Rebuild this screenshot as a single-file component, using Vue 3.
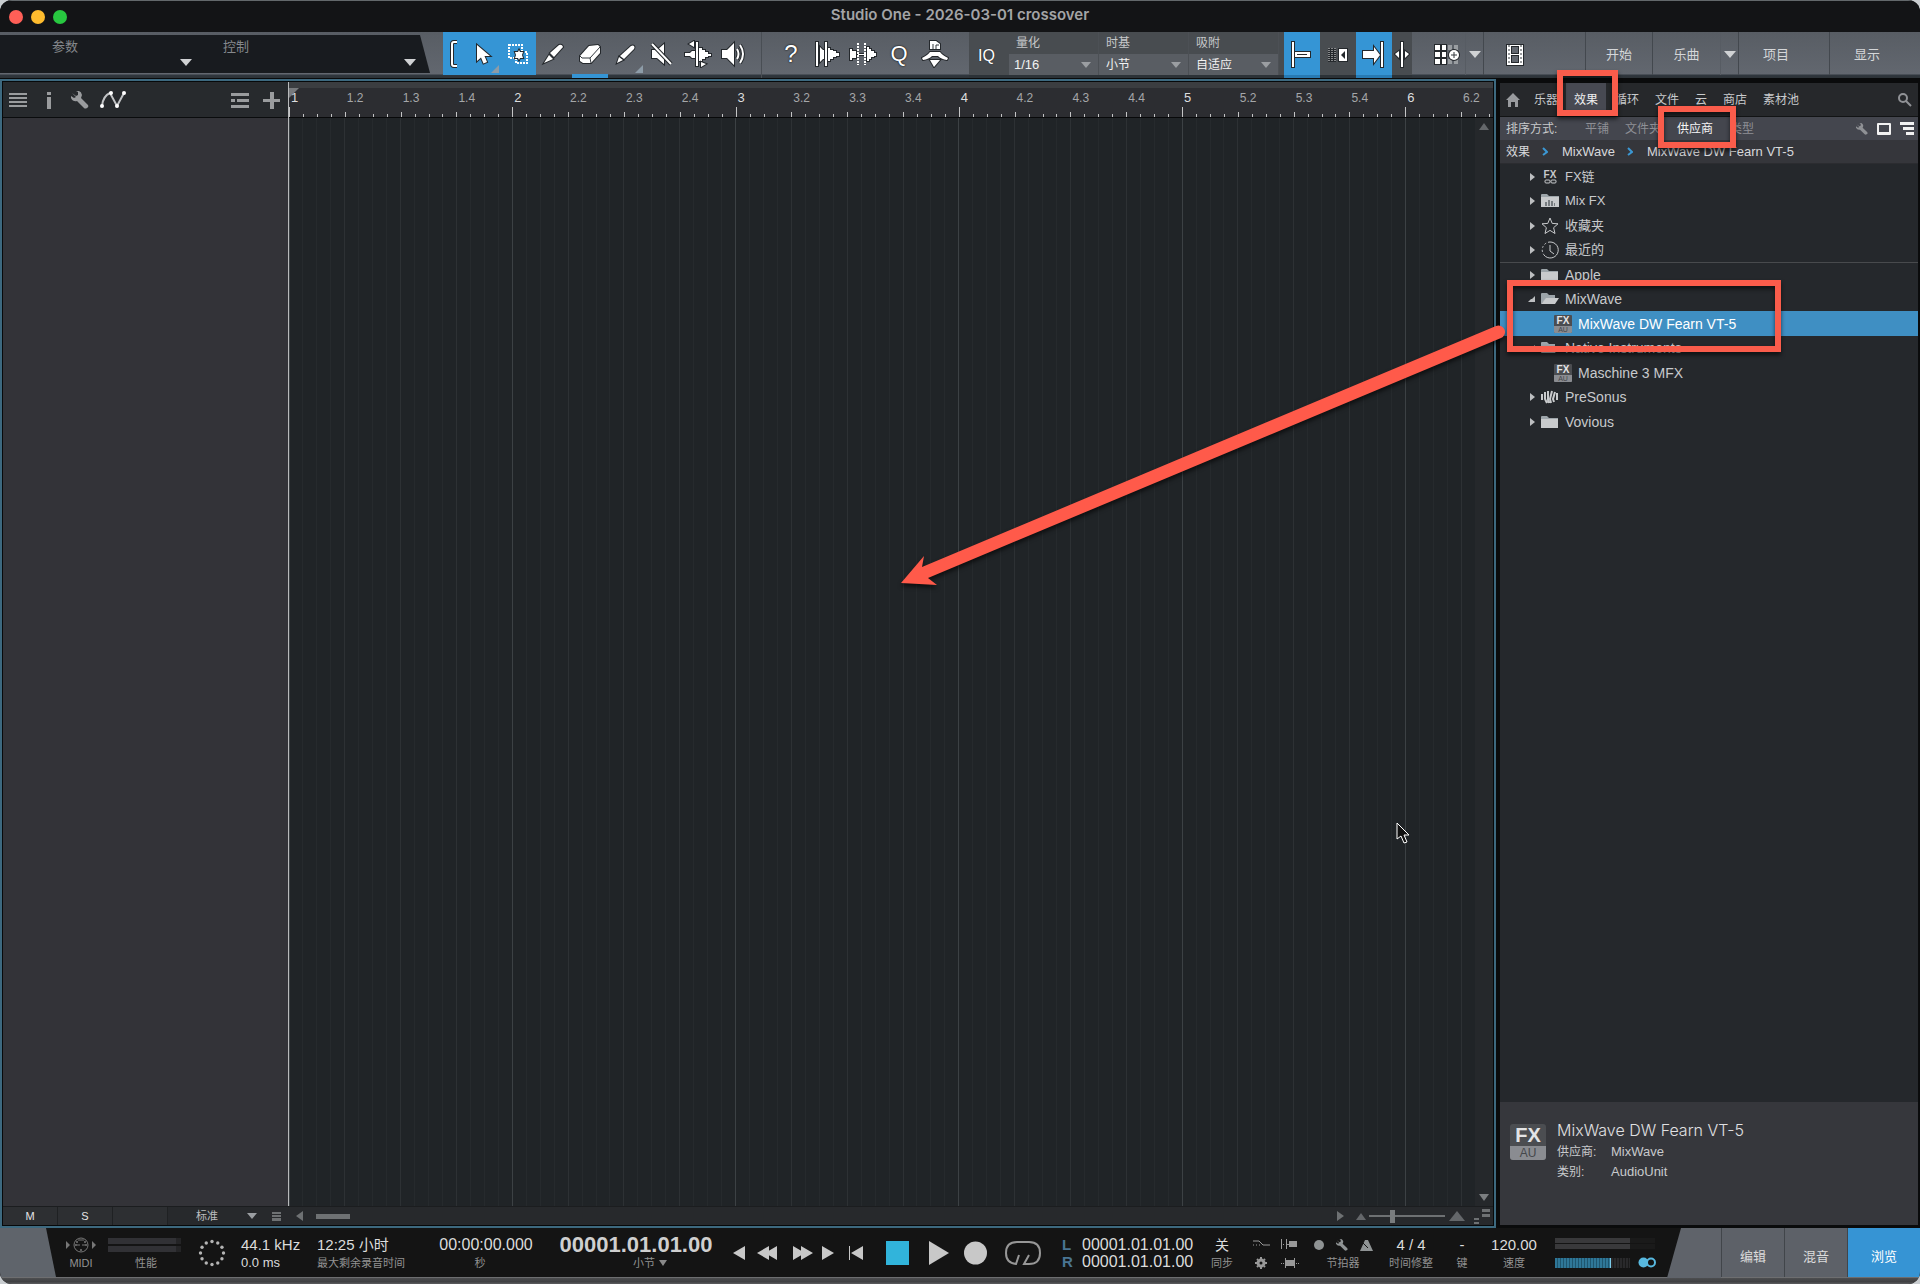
<template>
  <div class="window">
    <header class="titlebar">
      <div class="lights">
        <button class="light red" aria-label="关闭"></button>
        <button class="light yellow" aria-label="最小化"></button>
        <button class="light green" aria-label="缩放"></button>
      </div>
      <h1>Studio One - 2026-03-01 crossover</h1>
    </header>

    <div class="toolbar">
      <div class="params">
        <button class="param">参数<i class="caret"></i></button>
        <button class="param wide">控制<i class="caret"></i></button>
      </div>

      <div class="tools">
        <div class="tool-active">
          <button class="tool slim" aria-label="括号">
            <svg width="10" height="28" viewBox="0 0 10 28"><path class="dark" d="M8 2H5Q3 2 3 4v20q0 2 2 2h3" /><path class="line" d="M8 2H5Q3 2 3 4v20q0 2 2 2h3" /></svg>
          </button>
          <button class="tool" aria-label="箭头工具">
            <svg width="28" height="28" viewBox="0 0 28 28"><path d="M9 5v16l4-3.500 2.500 6 3.500-1.500-2.500-6h5.500z" /></svg>
            <i class="corner"></i>
          </button>
          <button class="tool" aria-label="范围工具">
            <svg width="28" height="28" viewBox="0 0 28 28">
              <path class="line dash" d="M5 5h13v13H5zM12 12h11v11H12z" />
              <path d="M11 12l3 0 1-2 1 2h3l-1 3 1 3h-3l-1 2-1-2h-3l1-3z" />
            </svg>
          </button>
        </div>
        <button class="tool" aria-label="分割工具">
          <svg width="28" height="28" viewBox="0 0 28 28"><path d="M4 23l5-8 4 4z" /><path d="M10 13L19 5q3-1 4 2l-9 10z" /></svg>
        </button>
        <button class="tool marked" aria-label="橡皮擦工具">
          <svg width="28" height="28" viewBox="0 0 28 28"><path d="M4 16L13 6l9-1 2 2v6l-9 10H7l-3-2z" /><path class="thin" d="M4 16l2 2h8l10-11M14 18l1 5" /></svg>
        </button>
        <button class="tool" aria-label="铅笔工具">
          <svg width="28" height="28" viewBox="0 0 28 28"><path d="M5 23l2-6 4 3z" /><path d="M8 16L19 6q2-1 3 0t0 3L12 19z" /></svg>
          <i class="corner"></i>
        </button>
        <button class="tool" aria-label="静音工具">
          <svg width="28" height="28" viewBox="0 0 28 28"><path d="M4 10h5l7-6v20l-7-6H4z" /><path class="dark" d="M4 4l19 20" /><path class="line" d="M4 4l19 20" /></svg>
        </button>
        <button class="tool" aria-label="弯曲工具">
          <svg width="28" height="28" viewBox="0 0 28 28"><path d="M1 13h5l2-2h3v7H8l-2-2H1z" /><path d="M15 8h3v2h3v2h3v2h3v2h-3v1h-3v2h-3v2h-3z" /><path d="M12 2h2v24h-2z" /><path d="M10 1v6L5 4zM17 27v-5l5 2z" /></svg>
        </button>
        <button class="tool" aria-label="试听工具">
          <svg width="28" height="28" viewBox="0 0 28 28"><path d="M2 10h5l7-7v22l-7-7H2z" /><path class="dark" d="M17 9q3 5 0 10M20 5q6 9 0 18" /><path class="line" d="M17 9q3 5 0 10M20 5q6 9 0 18" /></svg>
        </button>
      </div>

      <div class="tools actions">
        <button class="tool question" aria-label="信息">?</button>
        <button class="tool" aria-label="音频弯曲">
          <svg width="28" height="28" viewBox="0 0 28 28"><path d="M7 7l3 3h5V8h2v2h3v1h3v2h3v3h-3v1h-3v2h-3v2h-2v-2h-5l-3 3z" /><path d="M3 2h2v24H3z" /><path d="M12 2h2v24h-2z" /></svg>
        </button>
        <button class="tool" aria-label="剥离静音">
          <svg width="28" height="28" viewBox="0 0 28 28"><path d="M1 9h2v2h4v7H3v2H1z" /><path d="M18 7h2v2h2v2h3v2h2v3h-2v1h-3v2h-2v2h-2z" /><path d="M9 14h8v1H9z" /><path class="line dash" d="M9 3v22M16 3v22" /></svg>
        </button>
        <button class="tool round" aria-label="量化">Q</button>
        <button class="tool" aria-label="宏">
          <svg width="28" height="28" viewBox="0 0 28 28"><path d="M9 1h6l4 3v5H9z" /><path class="thin" d="M12 9V4M15 9V5h3" /><path d="M1 18q6-3 8-6h10q2 3 8 6l-1 2q-6-1-9-4h-6q-3 3-9 4z" /><path d="M9 20h10l-6 7z" /></svg>
        </button>
      </div>

      <div class="quantize">
        <button class="iq">IQ</button>
        <div v-for="f in fields" :key="f.id" class="field">
          <label :for="f.id">{{ f.label }}</label>
          <div class="select-box">
            <select :id="f.id" v-model="f.value"><option>{{ f.value }}</option></select>
            <i class="caret small"></i>
          </div>
        </div>
        <div class="snaps">
          <button class="snap on" aria-label="吸附到网格">
            <svg width="28" height="28" viewBox="0 0 28 28"><path d="M6 12h16v5H6z" /><path d="M4 2h2v25H4z" /><path class="fill-dark" d="M9 14h10v1H9z" /></svg>
          </button>
          <button class="snap" aria-label="波纹编辑">
            <svg width="28" height="28" viewBox="0 0 28 28"><path class="fill-dark" d="M4 8h8v14H4z" /><path class="ripple" d="M5 8v14M8 8v14M11 8v14" /><path d="M15 9h8v12h-8z" /><path class="fill-dark" d="M21 11v8l-4-4z" /></svg>
          </button>
          <button class="snap on" aria-label="自动滚动">
            <svg width="28" height="28" viewBox="0 0 28 28"><path d="M3 11h11V7l6 8-6 8v-5H3z" /><path d="M21 2h2v25h-2z" /></svg>
          </button>
          <button class="snap narrow" aria-label="光标跟随">
            <svg width="16" height="28" viewBox="0 0 16 28"><path d="M7 2h2v25H7zM5 11v7l-4-4zM11 11v7l4-4z" /></svg>
          </button>
        </div>
      </div>

      <nav class="pages">
        <button class="page grid-btn" aria-label="轨道">
          <svg width="28" height="24" viewBox="0 0 28 24">
            <path class="faint" d="M14 2h4v5h-4zM20 2h4v5h-4zM20 16h4v5h-4zM14 16h4v5h-4z" />
            <path d="M1 2h5v5H1zM8 2h4v5H8zM1 9h5v5H1zM8 9h4v5H8zM1 16h5v5H1zM8 16h4v5H8z" />
            <circle cx="20" cy="12" r="5" /><path class="thin" d="M17 12h6M20 9v6" />
          </svg>
        </button>
        <button class="page drop" aria-label="轨道选项"><i class="caret"></i></button>
        <button class="page film" aria-label="视频">
          <svg width="20" height="24" viewBox="0 0 20 24"><path d="M2 2h16v20H2z" /><path class="fill-gray" d="M7 4h6v6H7zM7 13h6v6H7z" /><path class="thin" stroke-dasharray="2 2" d="M4 2v20M16 2v20" /></svg>
        </button>
        <button class="page start">开始</button>
        <button class="page song">乐曲</button>
        <button class="page drop" aria-label="乐曲列表"><i class="caret"></i></button>
        <button class="page project">项目</button>
        <button class="page show">显示</button>
      </nav>
    </div>

    <main class="main">
      <section class="arrange">
        <div class="track-side">
          <div class="track-head">
            <button class="ico" aria-label="菜单"><svg width="18" height="14" viewBox="0 0 18 14"><path d="M0 0h18v2H0zM0 4h18v2H0zM0 8h18v2H0zM0 12h18v2H0z" /></svg></button>
            <button class="ico" aria-label="检查器"><svg width="4" height="17" viewBox="0 0 4 17"><path d="M0 0h4v3H0zM0 5h4v12H0z" /></svg></button>
            <button class="ico wrench" aria-label="设置"><svg width="18" height="18" viewBox="0 0 18 18"><path :d="wrench" /></svg></button>
            <button class="ico curve" aria-label="自动化">
              <svg width="28" height="18" viewBox="0 0 28 18"><path class="wave" d="M3 15Q4 5 11 2l7 13 7-13" /><circle cx="3" cy="15" r="2" /><circle cx="12" cy="2" r="2" /><circle cx="18" cy="15" r="2" /><circle cx="25" cy="2" r="2" /></svg>
            </button>
            <button class="ico tracks" aria-label="轨道列表"><svg width="18" height="15" viewBox="0 0 18 15"><path d="M0 0h18v3H0zM0 6h4v3H0zM6 6h12v3H6zM0 12h18v3H0z" /></svg></button>
            <button class="ico" aria-label="添加轨道"><svg width="17" height="17" viewBox="0 0 17 17"><path d="M7 0h4v7h6v3h-6v7H7v-7H0V7h7z" /></svg></button>
          </div>
          <div class="track-list"></div>
        </div>

        <div class="timeline">
          <div class="ruler">
            <i class="loop-start"></i>
            <span v-for="b in beats" :key="b.label" class="beat" :class="{ bar: b.bar }" :style="{ width: beatWidth + '%' }">
              <b>{{ b.label }}</b>
            </span>
          </div>
          <div class="lanes">
            <svg class="grid" width="100%" height="100%">
              <line v-for="l in lines" :key="l.n" :x1="l.x + '%'" :x2="l.x + '%'" y1="0" y2="100%" :class="l.kind" />
            </svg>
            <div class="vscroll">
              <i class="up"></i>
              <i class="down"></i>
            </div>
          </div>
        </div>

        <div class="arrange-foot">
          <button class="cell">M</button>
          <button class="cell">S</button>
          <span class="cell"></span>
          <div class="select-box height-box">
            <select v-model="trackHeight" aria-label="轨道高度"><option>标准</option></select>
            <i class="caret small"></i>
          </div>
          <svg class="mini" width="9" height="9" viewBox="0 0 9 9"><path d="M0 0h9v2H0zM0 3h9v2H0zM0 6h9v3H0z" /></svg>
          <i class="left"></i>
          <i class="hthumb"></i>
          <i class="right"></i>
          <i class="hill"></i>
          <input v-model="zoom" class="zoom" type="range" min="0" max="100" aria-label="缩放" />
          <i class="hill big"></i>
          <svg class="mini levels" width="16" height="15" viewBox="0 0 16 15"><path d="M8 0h8v3H8zM8 5h8v3H8zM0 9h5v2H0zM0 13h5v2H0z" /></svg>
        </div>
      </section>

      <aside class="browser">
        <div class="tabs">
          <button class="home" aria-label="主页"><svg width="14" height="14" viewBox="0 0 14 14"><path d="M7 0l7 7h-2v7H9V9H5v5H2V7H0z" /></svg></button>
          <button v-for="t in tabs" :key="t" class="tab" :class="{ selected: t === tab }" @click="tab = t">{{ t }}</button>
          <button class="search" aria-label="搜索"><svg width="15" height="15" viewBox="0 0 15 15"><circle cx="6" cy="6" r="4" /><path d="M9 9l5 5" /></svg></button>
        </div>
        <div class="sort">
          <span class="sort-label">排序方式:</span>
          <button v-for="s in sorts" :key="s" class="sort-by" :class="{ selected: s === sort }" @click="sort = s">{{ s }}</button>
          <div class="sort-icons">
            <svg class="dim" width="12" height="12" viewBox="0 0 18 18"><path :d="wrench" /></svg>
            <svg width="14" height="12" viewBox="0 0 14 12"><path fill-rule="evenodd" d="M1 0h12q1 0 1 1v10q0 1-1 1H1q-1 0-1-1V1q0-1 1-1zM2 2v7h10V2z" /></svg>
            <svg width="14" height="13" viewBox="0 0 14 13"><path d="M0 0h14v3H0zM3 5h11v3H3zM6 10h8v3H6z" /></svg>
          </div>
        </div>
        <nav class="crumbs">
          <a href="#">效果</a>
          <svg width="6" height="9" viewBox="0 0 6 9"><path d="M1 1l4 4-4 3" /></svg>
          <a href="#" class="latin">MixWave</a>
          <svg width="6" height="9" viewBox="0 0 6 9"><path d="M1 1l4 4-4 3" /></svg>
          <a href="#" class="latin">MixWave DW Fearn VT-5</a>
        </nav>

        <ul class="tree">
          <li v-for="n in nodes" :key="n.name" class="node" :class="{ child: n.child, active: n.name === selected, divided: n.divided }">
            <button @click="selected = n.name">
              <i v-if="!n.child" class="twist" :class="{ open: n.open }"></i>
              <span v-if="n.icon === 'plugin'" class="plugin"><b>FX</b><small>AU</small></span>
              <span v-else-if="n.icon === 'chain'" class="chain">
                <b>FX</b>
                <svg width="13" height="5" viewBox="0 0 13 5"><rect x="1" y="1" width="5" height="3" rx="1" /><rect x="7" y="1" width="5" height="3" rx="1" /></svg>
              </span>
              <svg v-else class="kind" width="18" height="18" viewBox="0 0 18 18">
                <template v-if="n.icon === 'folder'">
                  <path class="back" d="M0 4q0-1 1-1h5l2 2h9v3H0z" /><path d="M0 6h17v9H0z" />
                </template>
                <template v-else-if="n.icon === 'open'">
                  <path class="back" d="M0 4q0-1 1-1h5l2 2h6v3H6l-6 6z" /><path d="M5 8h13l-4 6H0z" />
                </template>
                <template v-else-if="n.icon === 'mix'">
                  <path class="back" d="M0 3q0-1 1-1h5l2 2h10v3H0z" /><path d="M0 5h18v10H0z" /><path class="bars" d="M4 10h2v4H4zM7 8h2v6H7zM10 9h2v5h-2zM13 11h1v3h-1z" />
                </template>
                <path v-else-if="n.icon === 'star'" class="stroke" d="M9 1l2.200 5.400 5.800.400-4.400 3.900 1.400 5.800L9 13.400l-5 3.100 1.400-5.800L1 6.800l5.800-.4z" />
                <template v-else-if="n.icon === 'recent'">
                  <path class="stroke" d="M9 1a8 8 0 1 1-6 13M9 4v6l4 3" /><path class="stroke" stroke-dasharray="2 2" d="M9 1a8 8 0 0 0-6 13" />
                </template>
                <path v-else class="voices" d="M1 6v6M4 4v7l2 4M7 3v9l1 3M11 3L9 11l1 4M14 4l-2 7 1 3M16 5v7" />
              </svg>
              <span class="name">{{ n.name }}</span>
            </button>
          </li>
        </ul>

        <div class="details">
          <span class="plugin large"><b>FX</b><small>AU</small></span>
          <div>
            <h2>MixWave DW Fearn VT-5</h2>
            <dl>
              <dt>供应商:</dt><dd>MixWave</dd>
              <dt>类别:</dt><dd>AudioUnit</dd>
            </dl>
          </div>
        </div>
      </aside>
    </main>

    <footer class="transport">
      <i class="wedge"></i>
      <div class="stat midi">
        <span><svg width="32" height="18" viewBox="0 0 32 18"><path class="tri" d="M1 5v8l4-4zM27 5v8l4-4z" /><circle class="ring" cx="16" cy="9" r="7" /><circle cx="11" cy="9" r="1" /><circle cx="21" cy="9" r="1" /><circle cx="12" cy="6" r="1" /><circle cx="20" cy="6" r="1" /><circle cx="16" cy="14" r="1" /><path class="ring" d="M13 4h6M12 9h3M17 9h3" /></svg></span>
        <small>MIDI</small>
      </div>
      <div class="stat perf">
        <span class="meters"><i></i><i></i></span>
        <small>性能</small>
      </div>
      <div class="disk">
        <svg width="28" height="28" viewBox="0 0 28 28"><circle v-for="d in dots" :key="d.n" :cx="d.x" :cy="d.y" r="1.700" /></svg>
      </div>
      <div class="stat rate"><span>44.1 kHz</span><small>0.0 ms</small></div>
      <div class="stat remain"><span>12:25 小时</span><small>最大剩余录音时间</small></div>
      <div class="stat clock"><span>00:00:00.000</span><small>秒</small></div>
      <div class="stat position"><span>00001.01.01.00</span><small>小节<i class="caret tiny"></i></small></div>
      <div class="controls">
        <button aria-label="上一个"><svg width="12" height="24" viewBox="0 0 12 24"><path d="M12 5v14L0 12z" /></svg></button>
        <button aria-label="快退"><svg width="20" height="24" viewBox="0 0 20 24"><path d="M12 5v14L0 12zM20 5v14L8 12z" /></svg></button>
        <button aria-label="快进"><svg width="20" height="24" viewBox="0 0 20 24"><path d="M0 5v14l12-7zM8 5v14l12-7z" /></svg></button>
        <button aria-label="下一个"><svg width="12" height="24" viewBox="0 0 12 24"><path d="M0 5v14l12-7z" /></svg></button>
        <button aria-label="归零"><svg width="14" height="24" viewBox="0 0 14 24"><path d="M0 5h1v14H0zM14 5v14L2 12z" /></svg></button>
        <button aria-label="停止"><svg width="23" height="24" viewBox="0 0 23 24"><path class="stop" d="M0 0h23v24H0z" /></svg></button>
        <button aria-label="播放"><svg width="20" height="24" viewBox="0 0 20 24"><path d="M0 0v24l20-12z" /></svg></button>
        <button aria-label="录音"><svg width="23" height="24" viewBox="0 0 23 24"><circle cx="11.500" cy="12" r="11.500" /></svg></button>
        <button aria-label="循环"><svg width="36" height="24" viewBox="0 0 36 24"><path class="loop" d="M14 14l-3 9Q1 22 1 12 1 1 12 1h12q11 0 11 11t-11 11h-5l5-9" /></svg></button>
      </div>
      <div class="locators">
        <b>L</b><span>00001.01.01.00</span>
        <b>R</b><span>00001.01.01.00</span>
      </div>
      <div class="stat sync"><span>关</span><small>同步</small></div>
      <div class="options">
        <svg width="18" height="12" viewBox="0 0 18 12"><path class="stroke" d="M1 3h6l4 4h7" /><path class="stroke" stroke-dasharray="1 2" d="M1 7h7" /></svg>
        <svg width="16" height="12" viewBox="0 0 16 12"><path d="M0 1h1v10H0zM5 1h1v10H5zM8 3h8v6H8zM6 6h2v1H6zM2 6h1v1H2z" /></svg>
        <svg width="18" height="12" viewBox="0 0 18 12"><circle class="gear" cx="9" cy="6" r="3" /><path class="teeth" d="M9 0v2M9 10v2M3 6h2M13 6h2M5 2l1 1M12 9l1 1M5 10l1-1M12 3l1-1" /></svg>
        <svg width="18" height="12" viewBox="0 0 18 12"><path d="M4 1h1v2h8V1h1v10h-1V9H5v2H4zM0 6h1v1H0zM2 6h1v1H2zM15 6h1v1h-1zM17 6h1v1h-1z" /></svg>
      </div>
      <div class="stat metronome">
        <span>
          <svg width="10" height="12" viewBox="0 0 10 12"><circle cx="5" cy="6" r="5" /></svg>
          <svg width="12" height="12" viewBox="0 0 18 18"><path :d="wrench" /></svg>
          <svg width="13" height="12" viewBox="0 0 13 12"><path d="M5 1h3l5 11H0z" /><path class="cut" d="M1 2l7 7" /></svg>
        </span>
        <small>节拍器</small>
      </div>
      <div class="stat signature"><span>4 / 4</span><small>时间修整</small></div>
      <div class="stat key"><span>-</span><small>键</small></div>
      <div class="stat tempo"><span>120.00</span><small>速度</small></div>
      <div class="output">
        <span class="meters"><i></i><i></i></span>
        <div class="volume"><i class="level"></i><i class="rest"></i><svg width="19" height="11" viewBox="0 0 19 11"><circle cx="5.500" cy="5.500" r="5" /><circle class="ring" cx="13" cy="5.500" r="4" /></svg></div>
      </div>
      <div class="views">
        <i class="slope"></i>
        <button>编辑</button>
        <button>混音</button>
        <button class="on">浏览</button>
      </div>
    </footer>
    <div class="edge"></div>

    <svg class="pointer" width="14" height="22" viewBox="0 0 14 22"><path d="M1 1v16l4-3 3 7 3-1-3-7h5z" /></svg>
    <svg class="marks" width="1920" height="1284" viewBox="0 0 1920 1284">
      <rect x="1560" y="73" width="55" height="40" />
      <rect x="1661" y="109" width="72" height="36" />
      <rect x="1510" y="283" width="268" height="66" />
      <path d="M901 583l23-27-2 11L1496 326a6.500 6.500 0 0 1 5 12L928 578l9 7z" />
    </svg>
  </div>
</template>

<script setup>
import { ref, reactive } from 'vue';

const wrench = 'M1 2l4 3 2-1V1L5 0q5-1 6 4l-1 3 7 7q1 2-1 3t-3 0L6 10q-4 1-6-3V5l3 2 2-1z';

const fields = reactive([
  { id: 'quantize', label: '量化', value: '1/16' },
  { id: 'timebase', label: '时基', value: '小节' },
  { id: 'snap', label: '吸附', value: '自适应' },
]);

const trackHeight = ref('标准');
const zoom = ref(29);

const tabs = ['乐器', '效果', '循环', '文件', '云', '商店', '素材池'];
const tab = ref('效果');
const sorts = ['平铺', '文件夹', '供应商', '类型'];
const sort = ref('供应商');

const selected = ref('MixWave DW Fearn VT-5');
const nodes = [
  { name: 'FX链', icon: 'chain' },
  { name: 'Mix FX', icon: 'mix' },
  { name: '收藏夹', icon: 'star' },
  { name: '最近的', icon: 'recent' },
  { name: 'Apple', icon: 'folder', divided: true },
  { name: 'MixWave', icon: 'open', open: true },
  { name: 'MixWave DW Fearn VT-5', icon: 'plugin', child: true },
  { name: 'Native Instruments', icon: 'open', open: true },
  { name: 'Maschine 3 MFX', icon: 'plugin', child: true },
  { name: 'PreSonus', icon: 'voices' },
  { name: 'Vovious', icon: 'folder' },
];

// visible part of the song, in beats
const visible = 21.57;
const beatWidth = 100 / visible;

const beats = Array.from({ length: 22 }, (_, i) => {
  const bar = Math.floor(i / 4) + 1;
  const beat = (i % 4) + 1;
  return { bar: beat === 1, label: beat === 1 ? `${bar}` : `${bar}.${beat}` };
});

const lines = Array.from({ length: 85 }, (_, i) => ({
  n: i,
  x: (i * beatWidth) / 4,
  kind: i % 16 === 0 ? 'bar' : i % 4 === 0 ? 'beat' : 'step',
}));

const dots = Array.from({ length: 12 }, (_, n) => ({
  n,
  x: 14 + 11.5 * Math.cos((n * Math.PI) / 6),
  y: 14 + 11.5 * Math.sin((n * Math.PI) / 6),
}));
</script>

<style>
body {
  margin: 0;
  background: #c9cdd0;
}
</style>

<style scoped>
* {
  box-sizing: border-box;
}

.window {
  position: relative;
  display: flex;
  flex-direction: column;
  height: 100vh;
  overflow: hidden;
  border-radius: 12px;
  background: #0a0b0c;
  color: #c8cacc;
  font: 12px/16px "Liberation Sans", "Noto Sans CJK SC", sans-serif;
}

button, select {
  margin: 0;
  padding: 0;
  border: 0;
  border-radius: 0;
  background: none;
  color: inherit;
  font: inherit;
}

svg {
  display: block;
  flex: none;
  fill: currentColor;
}

a {
  color: inherit;
  text-decoration: none;
}

.caret {
  width: 0;
  height: 0;
  border: 6px solid transparent;
  border-top: 7px solid #d0d2d4;
  border-bottom: 0;
}

.caret.small {
  border-width: 6px 5px 0;
  border-top-color: #9b9ea2;
}

.caret.tiny {
  border-width: 6px 4px 0;
  border-top-color: #8a8a8a;
}

/* title bar */
.titlebar {
  position: relative;
  flex: none;
  display: flex;
  align-items: center;
  justify-content: center;
  height: 32px;
  border-top: 1px solid #63686b;
  background: #131416;
}

.lights {
  position: absolute;
  left: 9px;
  display: flex;
  gap: 8px;
}

.light {
  width: 14px;
  height: 14px;
  border-radius: 50%;
}

.red { background: #ff5f57; }
.yellow { background: #febc2e; }
.green { background: #28c840; }

h1 {
  margin: 0 0 3px;
  color: #a3a4a6;
  font: 600 15px/18px Inter, sans-serif;
}

/* toolbar */
.toolbar {
  flex: none;
  display: flex;
  height: 46px;
  background: linear-gradient(#585d64, #62676f 42px, #30373e 43px, #2c3237);
  color: #fff;
}

.params {
  flex: none;
  display: flex;
  width: 431px;
  height: 38px;
  margin: 3px 12px 0 0;
  background: #181b1f;
  clip-path: polygon(0 0, 420px 0, 430px 100%, 0 100%);
}

.param {
  position: relative;
  width: 200px;
  padding: 0 70px 14px 0;
  color: #85888c;
  font-size: 13px;
}

.param.wide {
  width: 224px;
  padding-right: 152px;
}

.param .caret {
  position: absolute;
  right: 8px;
  bottom: 7px;
}

.tools {
  flex: none;
  display: flex;
  width: 319px;
  border-right: 1px solid #494e54;
}

.tools.actions {
  width: 207px;
  padding-left: 11px;
  border: 0;
}

.tool-active {
  display: flex;
  height: 43px;
  background: #3595d5;
}

.tool {
  position: relative;
  display: flex;
  align-items: center;
  justify-content: center;
  width: 36px;
  height: 43px;
  padding-top: 1px;
}

.tool.slim {
  width: 21px;
}

.tool.marked {
  height: 46px;
  border-bottom: 4px solid #3595d5;
}

.tool svg, .snap svg, .page svg {
  fill: #fff;
  stroke: #24282c;
  stroke-width: 2;
  paint-order: stroke;
}

.toolbar .dark {
  fill: none;
  stroke: #24282c;
  stroke-width: 4;
}

.toolbar .line {
  fill: none;
  stroke: #fff;
  stroke-width: 2;
}

.toolbar .dash {
  stroke-dasharray: 2 1;
}

.toolbar .ripple {
  stroke: #e8e8e8;
  stroke-width: 1;
  stroke-dasharray: 1 1;
}

.toolbar .thin {
  fill: none;
  stroke: #33383d;
  stroke-width: 1;
}

.toolbar .fill-dark {
  fill: #24282c;
  stroke: none;
}

.toolbar .fill-gray {
  fill: #62676f;
  stroke-width: 2;
}

.toolbar .faint {
  fill: #999da1;
  stroke: none;
}

.corner {
  position: absolute;
  right: 1px;
  bottom: 2px;
  border: 4px solid transparent;
  border-right-color: #8d9ca8;
  border-bottom-color: #8d9ca8;
}

.question, .round {
  font-size: 22px;
  text-shadow: 0 0 2px #111, 0 0 1px #111;
}

.question {
  font-size: 24px;
}

.quantize {
  flex: none;
  display: flex;
  width: 443px;
  background: linear-gradient(#484c50 43px, #2c3237 43px);
}

.iq {
  width: 40px;
  height: 43px;
  padding: 4px 5px 0 0;
  font-size: 16px;
  text-shadow: 0 0 1px #111;
}

.field {
  display: flex;
  flex-direction: column;
  width: 90px;
  height: 43px;
  border-right: 1px solid #4c5055;
}

.field label {
  height: 22px;
  padding: 3px 0 0 7px;
  color: #c5c7c9;
}

.select-box {
  position: relative;
  display: flex;
  align-items: center;
}

.select-box select {
  width: 100%;
  height: 100%;
  appearance: none;
}

.select-box .caret {
  position: absolute;
  right: 7px;
  pointer-events: none;
}

.field .select-box {
  height: 21px;
  background: #595d63;
}

.field select {
  padding-left: 5px;
  color: #f2f2f2;
  font-size: 13px;
}

.field:nth-of-type(n + 2) select {
  font-size: 12px;
  padding-left: 7px;
}

.snaps {
  display: flex;
  padding-left: 5px;
}

.snap {
  display: flex;
  align-items: center;
  justify-content: center;
  width: 36px;
  padding-bottom: 2px;
}

.snap.on {
  background: linear-gradient(#3595d5 43px, #287bb4 43px);
}

.snap.narrow {
  width: 20px;
}

.pages {
  flex: 1;
  display: flex;
  height: 43px;
}

.page {
  display: flex;
  align-items: center;
  justify-content: center;
  padding-top: 2px;
  border-right: 1px solid #43484e;
  color: #d5d7d9;
  font-size: 13px;
}

.grid-btn {
  width: 54px;
  padding-left: 19px;
  border-color: #575c63;
}

.drop { width: 18px; }

.film {
  flex: 1;
  justify-content: flex-start;
  padding-left: 21px;
}

.start { width: 67px; }

.song {
  width: 68px;
  border-color: #575c63;
}

.project, .show {
  width: 91px;
  padding-right: 16px;
}

.show {
  width: 90px;
  border: 0;
}

/* arrangement */
.main {
  flex: 1;
  display: flex;
  min-height: 0;
  padding: 1px 2px 0 0;
}

.arrange {
  flex: 1;
  display: grid;
  grid-template-columns: 285px 1fr;
  grid-template-rows: 1fr 19px;
  min-width: 0;
  margin-right: 4px;
  padding: 1px;
  border: 2px solid #3d697f;
  background: #07090a;
}

.track-side, .timeline {
  display: flex;
  flex-direction: column;
  min-width: 0;
}

.track-head {
  display: flex;
  align-items: center;
  height: 36px;
  padding: 1px 8px 0 6px;
  border-bottom: 1px solid #0a0c0d;
  background: #272a2d;
  color: #9a9c9e;
}

.ico { margin-right: 20px; }
.ico.wrench { margin-right: 10px; }
.curve { color: #fff; }

.wave {
  fill: none;
  stroke: #c0c2c4;
  stroke-width: 2;
}

.ico.tracks {
  margin: 0 14px 0 auto;
}

.ico:last-child { margin: 0; }

.track-list {
  flex: 1;
  background: #333338;
}

.timeline {
  border-left: 1px solid #b8babb;
}

.ruler {
  position: relative;
  display: flex;
  height: 36px;
  overflow: hidden;
  border-top: 6px solid #3b3d40;
  border-bottom: 1px solid #08090a;
  background: #2c2d31;
}

.loop-start {
  position: absolute;
  border: 5px solid transparent;
  border-top-color: #77797c;
  border-left-color: #77797c;
}

.beat {
  position: relative;
  flex: none;
  padding: 2px 0 0 2px;
  background: repeating-linear-gradient(90deg, #c4c5c6 0 1px, transparent 1px 25%) 0 100% / 100% 3px no-repeat;
}

.beat::before {
  content: "";
  position: absolute;
  left: 0;
  bottom: 0;
  width: 1px;
  height: 5px;
  background: #c4c5c6;
}

.beat.bar::before {
  height: 10px;
}

.beat b {
  color: #a5a7a9;
  font-weight: 400;
}

.beat.bar b {
  color: #dcdddf;
  font-size: 13px;
}

.lanes {
  position: relative;
  flex: 1;
  min-height: 0;
  background: #202427;
}

.grid {
  position: absolute;
  inset: 0;
}

.grid line {
  stroke: #262a2d;
  shape-rendering: crispEdges;
}

.grid line.beat { stroke: #2d3134; }
.grid line.bar { stroke: #3c4144; }

.vscroll {
  position: absolute;
  inset: 0 0 0 auto;
  display: flex;
  flex-direction: column;
  align-items: center;
  justify-content: space-between;
  width: 18px;
  padding: 5px 0;
  background: #25282b;
}

.up, .down, .hill {
  border: 5px solid transparent;
  border-top: 0;
  border-bottom: 7px solid #64676a;
}

.down {
  border-top: 7px solid #7b7e80;
  border-bottom: 0;
}

.arrange-foot {
  grid-column: 1 / -1;
  display: flex;
  align-items: center;
  border-top: 1px solid #1b1d1f;
  background: #27292c;
  color: #6e7173;
}

.cell {
  width: 55px;
  height: 18px;
  border-right: 1px solid #1f2123;
  background: #2d2f32;
  color: #e5e5e5;
  font-size: 11px;
}

.height-box {
  width: 93px;
  height: 18px;
  margin-right: 11px;
}

.height-box select {
  padding-left: 28px;
  color: #bcbdbf;
  font-size: 11px;
}

.height-box .caret { right: 4px; }

.left, .right {
  border: 5px solid transparent;
  border-right: 7px solid #6e7173;
  border-left: 0;
}

.left { margin: 0 13px 0 15px; }

.right {
  margin: 0 12px 0 auto;
  border-left: 7px solid #6e7173;
  border-right: 0;
}

.hthumb {
  width: 34px;
  height: 5px;
  background: #6e7173;
}

.hill.big {
  border-width: 0 8px 10px;
  margin-right: 9px;
}

.zoom {
  width: 76px;
  height: 14px;
  margin: 0 4px 0 3px;
  appearance: none;
  background: linear-gradient(#6e7173, #6e7173) center / 100% 2px no-repeat;
}

.zoom::-webkit-slider-thumb {
  appearance: none;
  width: 5px;
  height: 13px;
  background: #797c7e;
}

.levels { margin-right: 3px; }

/* browser */
.browser {
  flex: none;
  display: flex;
  flex-direction: column;
  width: 418px;
  margin: 4px 0 3px;
  background: #25282c;
}

.tabs {
  display: flex;
  align-items: center;
  height: 34px;
  padding-left: 6px;
  border-bottom: 1px solid #121415;
  background: #26282b;
}

.home {
  margin-right: 6px;
  color: #999b9e;
}

.tab {
  height: 33px;
  padding: 0 8px;
}

.tab.selected {
  margin-right: 1px;
  background: #474952;
  color: #f0f0f0;
}

.search {
  margin: 0 6px 0 auto;
}

.search svg, .crumbs svg {
  fill: none;
  stroke: #909296;
  stroke-width: 2;
}

.sort {
  display: flex;
  align-items: center;
  height: 23px;
  padding-left: 6px;
  background: #44464e;
}

.sort-label { width: 71px; }

.sort-by {
  align-self: stretch;
  padding: 0 8px;
  color: #8f9096;
}

.sort-by.selected {
  margin-right: 1px;
  color: #f5f5f5;
}

.sort-icons {
  display: flex;
  align-items: center;
  gap: 9px;
  margin: 0 4px 0 auto;
  color: #f2f2f2;
}

.dim { color: #8f9195; }

.crumbs {
  display: flex;
  align-items: center;
  height: 24px;
  padding-left: 6px;
  border-bottom: 1px solid #2b2c30;
  background: #35363b;
  color: #d8d9db;
}

.crumbs .latin, dd { font-size: 13px; }

.crumbs svg {
  margin: 0 14px 0 12px;
  stroke: #3b97d3;
}

.tree {
  flex: 1;
  margin: 0;
  padding: 0;
  list-style: none;
}

.node { height: 25px; }
.node:nth-child(even) { height: 24px; }

.node button {
  display: flex;
  align-items: center;
  width: 100%;
  height: 100%;
  padding-left: 30px;
  font-size: 13px;
}

.node:nth-child(n + 5) button { font-size: 14px; }
.node.divided { border-top: 1px solid #484a4d; }
.node.child button { padding-left: 54px; }

.node.active {
  background: #3f8fc3;
  color: #fff;
}

.twist {
  width: 5px;
  margin-right: 6px;
  border: 4px solid transparent;
  border-left: 5px solid #bdbfc1;
  border-right: 0;
}

.twist.open {
  width: 7px;
  margin: 0 6px 0 -2px;
  border: 3px solid transparent;
  border-right-color: #bdbfc1;
  border-bottom-color: #bdbfc1;
}

.kind { margin-right: 6px; }
.back { fill: #9da5aa; }
.bars { fill: #777c80; }

.stroke, .voices {
  fill: none;
  stroke: currentColor;
}

.voices { stroke-width: 2; }

.chain {
  display: flex;
  flex-direction: column;
  align-items: center;
  width: 18px;
  margin-right: 6px;
}

.chain b {
  font-size: 10px;
  line-height: 9px;
}

.chain rect {
  fill: none;
  stroke: currentColor;
}

.plugin {
  flex: none;
  display: flex;
  flex-direction: column;
  width: 18px;
  height: 18px;
  margin-right: 6px;
  overflow: hidden;
  border-radius: 1px;
  background: #4b4d51;
  color: #e4e4e6;
  text-align: center;
}

.plugin b {
  font-size: 10px;
  line-height: 11px;
}

.plugin small {
  background: #8a8c91;
  color: #45474b;
  font-size: 7px;
  line-height: 7px;
}

.plugin.large {
  width: 36px;
  height: 36px;
  margin-right: 11px;
  border-radius: 3px;
}

.large b {
  font-size: 20px;
  line-height: 22px;
}

.large small {
  font-size: 12px;
  line-height: 14px;
}

.details {
  display: flex;
  height: 123px;
  padding: 22px 0 0 10px;
  background: #36373c;
}

h2 {
  margin: -4px 0 4px;
  color: #e0e0e2;
  font: 300 16px/20px Inter, sans-serif;
}

dl {
  display: grid;
  grid-template-columns: 54px auto;
  row-gap: 4px;
  margin: 0;
}

dd { margin: 0; }

/* transport */
.transport {
  flex: none;
  display: flex;
  height: 49px;
  background: #141414;
  color: #dcdcdc;
}

.wedge {
  width: 56px;
  background: #5f646b;
  clip-path: polygon(0 0, 46px 0, 100% 100%, 0 100%);
}

.stat {
  flex: none;
  padding-top: 7px;
  text-align: center;
  white-space: nowrap;
}

.stat span {
  display: flex;
  align-items: center;
  justify-content: center;
  height: 20px;
  font-size: 15px;
}

.stat small {
  display: block;
  color: #929292;
  font-size: 11px;
  line-height: 16px;
}

.midi { width: 50px; }
.midi svg { fill: #777; }

.midi .ring {
  fill: none;
  stroke: #777;
}

.perf { width: 80px; }

.stat .meters, .output .meters {
  display: flex;
  flex-direction: column;
  align-items: flex-start;
  gap: 2px;
}

.perf .meters { padding-left: 2px; }

.meters i {
  width: 73px;
  height: 6px;
  background: linear-gradient(90deg, #313135 68px, #242426 68px);
}

.disk {
  width: 54px;
  padding: 11px 12px;
  color: #b4b4b4;
}

.rate, .remain { text-align: left; }
.rate { width: 77px; padding-left: 1px; }
.rate span, .remain span { justify-content: flex-start; }

.rate small {
  color: #dcdcdc;
  font-size: 13px;
}

.remain { width: 116px; }
.clock { width: 106px; }
.clock span { font-size: 16px; }
.clock small { padding-right: 12px; }
.position { width: 194px; }

.position span {
  color: #cfcfcf;
  font-size: 22px;
  font-weight: 700;
}

.position small {
  display: flex;
  align-items: center;
  justify-content: center;
  gap: 4px;
  padding-left: 28px;
}

.controls {
  display: grid;
  grid-template-columns: 24px 36px 29px 27px 37px 43px 35px 41px 55px;
  align-items: center;
  color: #c8c8c8;
}

.stop { fill: #31b4db; }

.loop {
  fill: none;
  stroke: #979797;
  stroke-width: 2;
}

.locators {
  flex: none;
  display: grid;
  grid-template-columns: 20px 118px;
  grid-template-rows: 17px 17px;
  padding: 8px 0 0 2px;
  font-size: 16px;
  line-height: 18px;
}

.locators b {
  color: #4a7593;
  font-size: 15px;
}

.sync { width: 44px; }
.sync span { font-size: 14px; }

.options {
  display: grid;
  grid-template-columns: 29px 20px;
  align-content: start;
  row-gap: 7px;
  width: 63px;
  padding: 10px 0 0 8px;
  color: #999;
}

.gear {
  fill: none;
  stroke: #999;
  stroke-width: 3;
}

.teeth { stroke: #999; stroke-width: 2; }
.metronome { width: 72px; }

.metronome span {
  gap: 12px;
  color: #8f9394;
}

.cut {
  fill: none;
  stroke: #141414;
}

.signature { width: 64px; }
.key { width: 38px; }
.tempo { width: 66px; }

.output {
  width: 120px;
  padding: 10px 0 0 8px;
}

.output .meters {
  gap: 1px;
}

.output .meters i {
  width: 100px;
  height: 5px;
  background: linear-gradient(90deg, #39393b 75px, #1a1a1a 75px);
}

.volume {
  display: flex;
  align-items: center;
  height: 11px;
  margin-top: 8px;
  color: #58b9e0;
}

.level, .rest {
  width: 56px;
  height: 10px;
  border-right: 1px solid #7bcbe8;
  background: repeating-linear-gradient(90deg, #2f7798 0 2px, #1f566f 2px 3px);
}

.rest {
  width: 19px;
  margin-right: 8px;
  border: 0;
  background: repeating-linear-gradient(90deg, #29292b 0 2px, #1a1a1a 2px 3px);
}

.volume .ring {
  fill: #141414;
  stroke: currentColor;
  stroke-width: 2;
}

.views {
  flex: 1;
  display: flex;
  justify-content: flex-end;
  height: 50px;
}

.slope {
  flex: 1;
  background: #5f636a;
  clip-path: polygon(14px 0, 100% 0, 100% 100%, 0 100%);
}

.views button {
  width: 63px;
  padding-top: 8px;
  border-left: 1px solid #41454a;
  background: #5d6168;
  font-size: 13px;
}

.views button.on {
  width: 73px;
  background: #3694d4;
  color: #fff;
}

.edge {
  flex: none;
  height: 7px;
  border-top: 1px solid #6d6e70;
  background: linear-gradient(#4d4e50, #3f4042 60%, #5c5d5f);
}

/* overlays */
.pointer {
  position: absolute;
  top: 822px;
  left: 1396px;
  fill: #111;
  stroke: #fff;
}

.marks {
  position: absolute;
  top: 0;
  right: 0;
  fill: #ff5a4a;
  pointer-events: none;
  filter: drop-shadow(0 3px 2px rgba(0, 0, 0, 0.6));
}

.marks rect {
  fill: none;
  stroke: #fa5c4b;
  stroke-width: 6;
}
</style>
